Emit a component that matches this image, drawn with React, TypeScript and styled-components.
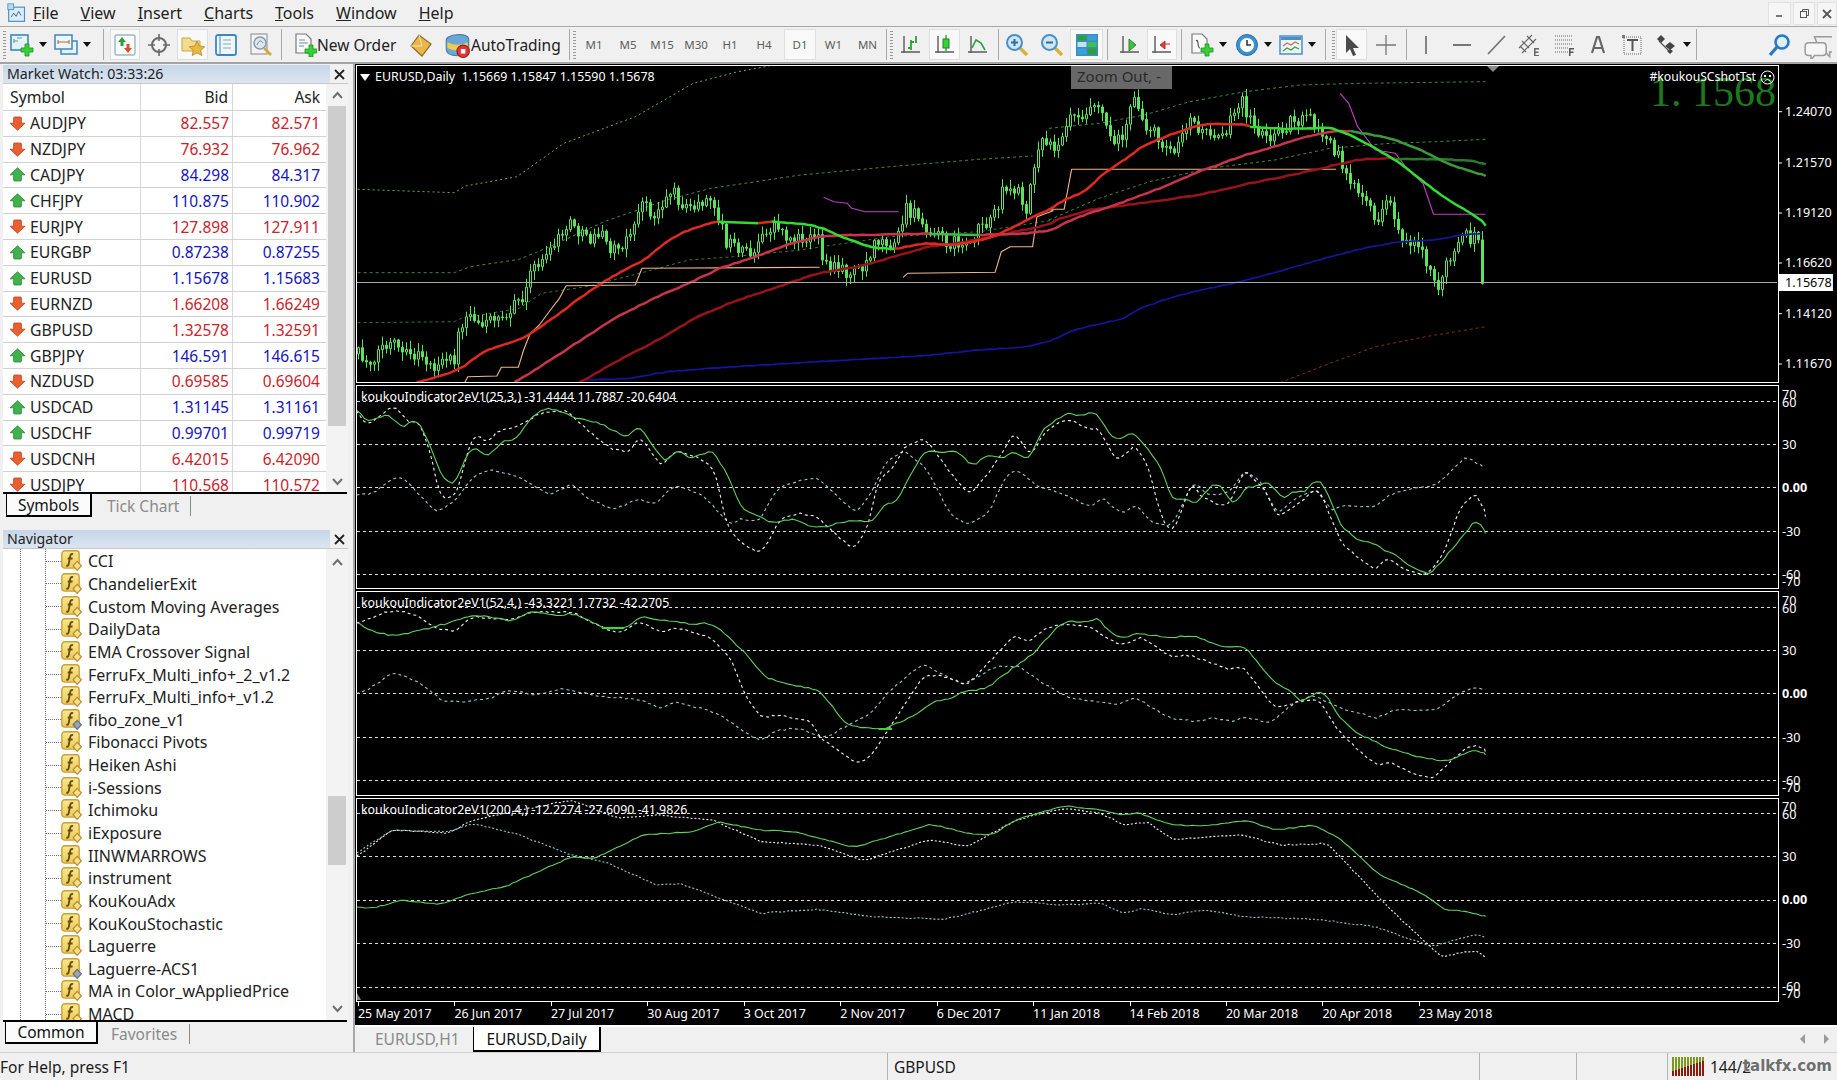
import React, { useMemo } from "react";
import styled, { createGlobalStyle } from "styled-components";

const Global = createGlobalStyle`
  html, body { margin: 0; padding: 0; background: #f0f0f0; overflow: hidden; }
  * { box-sizing: border-box; }
`;

const UI = `"Noto Sans", "Open Sans", sans-serif`;
const MT = `"Noto Sans", "Open Sans", sans-serif`;

/* ---------- shell ---------- */
const Page = styled.div`
  width: 1837px; height: 1080px; display: flex; flex-direction: column;
  background: #f0f0f0; color: #1a1a1a; font: 15.5px ${UI}; overflow: hidden; position: relative;
`;
const MenuBar = styled.div`
  height: 27px; display: flex; align-items: center; border-bottom: 1px solid #a8a8a8; padding-left: 7px; flex: none;
`;
const MenuList = styled.div`
  display: flex; gap: 22px; margin-left: 6px; font-size: 16px;
`;
const MenuItem = styled.span`color: #222;`;
const WinButtons = styled.div`
  margin-left: auto; display: flex; gap: 2px; height: 23px; align-self: flex-start; margin-top: 2px;
`;
const WinButton = styled.div<{ $w: number }>`
  width: ${(p) => p.$w}px; background: #f6f6f6; border: 1px solid #e2e2e2; display: flex; align-items: center; justify-content: center;
`;
const Toolbar = styled.div`
  height: 37px; flex: none; display: flex; align-items: center; border-bottom: 2px solid #a4a4a4;
`;
const Tool = styled.div<{ $w: number; $on?: boolean; $ml?: number; $pl?: number; $gap?: number }>`
  width: ${(p) => p.$w}px; height: 31px; flex: none; display: flex; align-items: center;
  justify-content: ${(p) => (p.$pl !== undefined ? "flex-start" : "center")};
  margin-left: ${(p) => p.$ml || 0}px; gap: ${(p) => p.$gap ?? 0}px;
  padding-left: ${(p) => p.$pl ?? 0}px;
  background: ${(p) => (p.$on ? "#f9f9f9" : "transparent")};
  border: 1px solid ${(p) => (p.$on ? "#dedede" : "transparent")};
  font-size: 15.5px; color: #222; white-space: nowrap;
`;
const Period = styled(Tool)`font-size: 11.5px; color: #5c5c5c;`;
const Caret = styled.i`
  display: block; width: 0; height: 0; border: 4px solid transparent; border-top: 5px solid #111; border-bottom: 0; margin-left: 5px;
`;
const Sep = styled.div<{ $w: number }>`
  width: ${(p) => p.$w}px; height: 31px; flex: none;
  background: linear-gradient(#a8a8a8, #a8a8a8) center / 1px 100% no-repeat;
`;
const Grip = styled.div<{ $w: number }>`
  width: ${(p) => p.$w}px; height: 28px; flex: none;
  background: repeating-linear-gradient(to bottom, #9a9a9a 0 1px, transparent 1px 3px) center / 3px 100% no-repeat;
`;
const ToolRight = styled.div`margin-left: auto; display: flex;`;
const Main = styled.div`flex: 1; display: flex; min-height: 0;`;
const Sidebar = styled.div`
  width: 355px; flex: none; display: flex; flex-direction: column; padding: 1px 0 0 3px; border-right: 2px solid #a8a8a8;
`;
const PanelBox = styled.div<{ $h: number }>`
  width: 345px; height: ${(p) => p.$h}px; flex: none; display: flex; flex-direction: column;
`;
const PanelTitle = styled.div<{ $mt?: number }>`
  height: 18px; flex: none; display: flex; align-items: center; justify-content: space-between; font-size: 14.2px; color: #222;
  margin-top: ${(p) => p.$mt || 0}px;
`;
const TitleFill = styled.div`
  width: 327px; height: 100%; background: linear-gradient(#c6d6e8, #dbe5f0); padding-left: 4px; line-height: 17px; white-space: nowrap;
`;
const CloseMark = styled.div`width: 18px; display: flex; justify-content: center;`;
const PanelBody = styled.div`flex: 1; display: flex; min-height: 0; border-top: 1px solid #c8c8c8;`;
const Grid = styled.div`width: 323px; flex: none; background: #fff; overflow: hidden;`;
const Row = styled.div<{ $head?: boolean }>`
  display: grid; grid-template-columns: 138px 92px 93px; height: ${(p) => (p.$head ? 27 : 25.8)}px;
  border-bottom: 1px solid #d2d2d2; align-items: center; color: #222;
`;
const SymCell = styled.div<{ $head?: boolean }>`
  height: 100%; display: flex; align-items: center; gap: 4px; padding-left: ${(p) => (p.$head ? 7 : 6)}px; border-right: 1px solid #d8d8d8;
  font-size: 15.8px;
`;
const NumCell = styled.div<{ $c?: string; $pad: number; $line?: boolean }>`
  height: 100%; display: flex; align-items: center; justify-content: flex-end; padding-right: ${(p) => p.$pad}px;
  color: ${(p) => p.$c || "#222"}; border-right: ${(p) => (p.$line ? "1px solid #d8d8d8" : "0")};
`;
const Scroll = styled.div`
  width: 22px; flex: none; display: flex; flex-direction: column; align-items: center; background: #f3f3f3;
`;
const ScrollCap = styled.div<{ $h: number }>`
  height: ${(p) => p.$h}px; flex: none; display: flex; align-items: center; justify-content: center;
`;
const ScrollTrack = styled.div`flex: 1; width: 18px; min-height: 0;`;
const Thumb = styled.div<{ $top: number; $h: number }>`
  margin-top: ${(p) => p.$top}px; height: ${(p) => p.$h}px; background: #cdcdcd;
`;
const TabStrip = styled.div<{ $h: number; $pl: number }>`
  height: ${(p) => p.$h}px; flex: none; display: flex; align-items: flex-start; border-top: 2px solid #000;
  padding-left: ${(p) => p.$pl}px; font-size: 15.5px; margin-right: 1px;
`;
const TabOn = styled.div<{ $w: number; $h: number }>`
  width: ${(p) => p.$w}px; height: ${(p) => p.$h}px; background: #fbfbfb; display: flex; align-items: center; justify-content: center;
  border: 1px solid #000; border-top: 0; border-bottom-width: 2px; border-right-width: 2px; color: #111;
`;
const TabOff = styled.div<{ $w: number; $pl: number }>`
  width: ${(p) => p.$w}px; height: 20px; margin-top: 2px; padding-left: ${(p) => p.$pl}px; line-height: 20px; color: #8a8a8a; border-right: 1px solid #8a8a8a;
`;
const NavList = styled.div`
  width: 323px; flex: none; padding-top: 1px; overflow: hidden; background-color: #fff;
  background-image:
    repeating-linear-gradient(to bottom, #777 0 1px, transparent 1px 2px),
    repeating-linear-gradient(to bottom, #777 0 1px, transparent 1px 2px);
  background-size: 1px 100%, 1px 100%;
  background-position: 17px 0, 42px 0;
  background-repeat: no-repeat;
`;
const NavRow = styled.div`
  height: 22.65px; display: flex; align-items: center; font-size: 16px; color: #222; white-space: nowrap; padding-left: 43px;
`;
const NavDots = styled.i`
  width: 15px; height: 1px; flex: none; background: repeating-linear-gradient(to right, #777 0 1px, transparent 1px 2px);
`;
const NavLabel = styled.span`margin-left: 5px;`;
const Workspace = styled.div`flex: 1; display: flex; flex-direction: column; min-width: 0;`;
const ChartArea = styled.div`
  height: 961px; flex: none; background: #000; padding: 1px 0 0 1px; display: flex; flex-direction: column; gap: 2px;
`;
const PaneRow = styled.div<{ $h: number }>`height: ${(p) => p.$h}px; flex: none; display: flex;`;
const Plot = styled.div`
  width: 1423px; flex: none; height: 100%; border: 1px solid #fff; position: relative; overflow: hidden;
`;
const PlotSvg = styled.svg`display: block; width: 100%; height: 100%;`;
const AxisSvg = styled.svg`
  display: block; flex: 1; min-width: 0; height: 100%; overflow: visible;
  text { font: 12.4px ${MT}; fill: #fff; }
`;
const Legend = styled.div`
  position: absolute; left: 18px; top: 2px; font: 12.4px/17px ${MT}; color: #fff; white-space: pre;
`;
const IndLegend = styled.div`
  position: absolute; left: 4px; top: 2px; font: 12.4px/17px ${MT}; color: #fff; white-space: pre;
`;
const LegendTri = styled.i`
  position: absolute; left: -15px; top: 6px; width: 0; height: 0; border: 5px solid transparent; border-top: 7px solid #fff; border-bottom: 0;
`;
const Shot = styled.div`
  position: absolute; right: 3px; top: 2px; display: flex; align-items: center; gap: 4px; font: 12.2px/18px ${MT}; color: #fff;
`;
const BigPrice = styled.div`
  position: absolute; right: 2px; top: 5px; font: 42px/42px "Liberation Serif", serif; color: #1c7a1c; white-space: pre;
`;
const ZoomTip = styled.div`
  position: absolute; left: 714px; top: -1px; width: 101px; height: 24px; background: rgba(118,118,118,.88); color: #2a2a2a;
  font-size: 15px; line-height: 23px; padding-left: 6px; white-space: pre;
`;
const TopMark = styled.i`
  position: absolute; left: 1130px; top: 0; width: 0; height: 0; border: 6px solid transparent; border-top: 6px solid #8a8a8a; border-bottom: 0;
`;
const TimeAxis = styled.div`
  height: 22px; flex: none; display: flex; margin-top: -2px; padding-left: 2px;
`;
const TimeCell = styled.div`
  width: 96.45px; flex: none; font: 12.4px/16px ${MT}; color: #fff; padding-top: 4px; white-space: nowrap;
  background: linear-gradient(#fff, #fff) left top / 1px 4px no-repeat;
`;
const WorkTabs = styled.div`
  height: 27px; flex: none; border-top: 2px solid #fff; display: flex; align-items: flex-start; font-size: 15.5px; padding-right: 7px;
`;
const WorkTabOff = styled.div`width: 118px; padding: 2px 0 0 20px; color: #8a8a8a; line-height: 21px;`;
const WorkTabOn = styled.div`
  width: 128px; height: 25px; background: #fff; border: 1px solid #000; border-top: 0; border-bottom-width: 2px; border-right-width: 2px;
  display: flex; align-items: center; justify-content: center; color: #111;
`;
const TabArrows = styled.div`margin-left: auto; display: flex; gap: 15px; height: 24px; align-items: center;`;
const StatusBar = styled.div`
  height: 28px; flex: none; display: flex; align-items: center; border-top: 1px solid #d0d0d0; font-size: 15.5px; position: relative;
`;
const StatusCell = styled.div<{ $w: number; $pl?: number }>`
  width: ${(p) => p.$w}px; height: 100%; flex: none; padding-left: ${(p) => p.$pl ?? 6}px; display: flex; align-items: center;
  border-right: 1px solid #b4b4b4; white-space: nowrap; gap: 6px;
`;
const StatusRest = styled.div`flex: 1; height: 100%; display: flex; align-items: center; padding-left: 4px; gap: 6px;`;
const Watermark = styled.div`
  position: absolute; right: 5px; top: 4px; font: bold 15px/18px "DejaVu Sans", sans-serif; color: #6f6f6f; text-shadow: 0 0 2px #fff;
`;

/* ---------- icons ---------- */
type SP = { s?: number; children?: React.ReactNode };
const Ico = ({ s = 24, children }: SP) => (
  <svg width={s} height={s} viewBox="0 0 24 24" fill="none" style={{ flex: "none" }}>{children}</svg>
);
const Plus = ({ x = 0, y = 0 }: { x?: number; y?: number }) => (
  <path transform={`translate(${x} ${y})`} d="M4 0h4v4h4v4H8v4H4V8H0V4h4z" fill="#37d037" stroke="#1b8f1b" strokeWidth=".8" />
);
const Axes = () => <path d="M5 3v17M2 19h19" stroke="#5b5b5b" strokeWidth="1.4" />;
const AppIcon = () => (
  <Ico s={20}>
    <rect x="2" y="5" width="19" height="17" fill="#dcecf8" stroke="#4c8fc4" strokeWidth="1.4" />
    <rect x="1" y="1" width="7" height="7" fill="#bcd8ef" stroke="#4c8fc4" />
    <path d="M5 17l3-5 3 4 3-6 3 5" stroke="#3d6fa0" strokeWidth="1.2" />
  </Ico>
);
const IcoNewChart = () => (
  <Ico>
    <rect x="1" y="2" width="17" height="15" fill="#e6f1fa" stroke="#3f86bf" strokeWidth="1.6" />
    <path d="M4 6v4M4 8h4M7 5h5" stroke="#5a8" strokeWidth="1.2" /><Plus x={11} y={11} />
  </Ico>
);
const IcoProfiles = () => (
  <Ico>
    <rect x="7" y="8" width="16" height="13" fill="#e6f1fa" stroke="#3f86bf" strokeWidth="1.5" />
    <rect x="1" y="2" width="17" height="14" fill="#eef5fb" stroke="#3f86bf" strokeWidth="1.5" />
    <path d="M4 9h11M4 7v4M15 7v4" stroke="#a07040" strokeWidth="1.1" />
  </Ico>
);
const IcoMarket = () => (
  <Ico>
    <rect x="2" y="2" width="20" height="20" rx="2" fill="#fafafa" stroke="#9ab8c8" strokeWidth="1.4" />
    <path d="M9 4l4 5h-2.5v4h-3V9H5z" fill="#2f9f3c" /><path d="M15 20l-4-5h2.5v-4h3v4H19z" fill="#d8502c" />
  </Ico>
);
const IcoNav = () => (
  <Ico>
    <circle cx="12" cy="12" r="7" stroke="#6a6a6a" strokeWidth="2" fill="#f4f4f4" />
    <path d="M12 1v7M12 16v7M1 12h7M16 12h7" stroke="#6a6a6a" strokeWidth="1.6" />
  </Ico>
);
const IcoFolder = () => (
  <Ico>
    <path d="M1 5h8l2 3h8v10H1z" fill="#f4dc8c" stroke="#c8a84a" />
    <path d="M16 8l2.4 5 5.4.7-4 3.6 1 5.3-4.8-2.7-4.8 2.7 1-5.3-4-3.6 5.4-.7z" fill="#e8b93c" stroke="#a8802a" strokeWidth=".7" />
  </Ico>
);
const IcoTerm = () => (
  <Ico>
    <rect x="2" y="2" width="20" height="20" rx="2" fill="#eef6fc" stroke="#3f86bf" strokeWidth="1.8" />
    <path d="M6 3v18" stroke="#3f86bf" /><path d="M9 7h8M9 11h8M9 15h8" stroke="#8aa" />
  </Ico>
);
const IcoTester = () => (
  <Ico>
    <rect x="2" y="1" width="16" height="20" fill="#f4f4f4" stroke="#a0a0a0" strokeWidth="1.3" />
    <circle cx="11" cy="10" r="6" fill="#dde6ee" stroke="#8a9aa8" strokeWidth="1.5" />
    <path d="M15 15l7 7" stroke="#d2a83c" strokeWidth="2.6" /><path d="M8 12c2-5 4-5 6-2" stroke="#7a8a98" />
  </Ico>
);
const IcoOrder = () => (
  <Ico>
    <path d="M3 1h10l5 5v14H3z" fill="#f8f8f8" stroke="#7a7a7a" strokeWidth="1.2" />
    <path d="M6 7h6M6 10h9M6 13h5" stroke="#7a8a9a" /><Plus x={12} y={12} />
  </Ico>
);
const IcoDiamond = () => (
  <Ico>
    <path d="M2 13L10 2l12 9-9 12z" fill="#e8b64a" stroke="#8a6a28" strokeWidth="1.2" />
    <path d="M10 2l3 11-11 0" stroke="#fbe4a0" strokeWidth="1" />
  </Ico>
);
const IcoAuto = () => (
  <Ico s={27}>
    <path d="M2 8c0-5 18-7 20-1v10c0 4-6 5-10 5C6 22 2 20 2 16z" fill="#68a8d8" stroke="#4a7aa0" />
    <path d="M3 10c6 3 12 3 18 0v5c-6 3-12 3-18 0z" fill="#f0cc4c" />
    <circle cx="17" cy="18" r="5.5" fill="#e0383a" stroke="#9c1c1c" /><rect x="15" y="16" width="4" height="4" fill="#fff" />
  </Ico>
);
const IcoBars = () => (<Ico><Axes /><path d="M12 7v10M9 15h3M12 9h3M17 3v7" stroke="#2f9f3c" strokeWidth="1.8" /></Ico>);
const IcoCandle = () => (<Ico><Axes /><path d="M13 2v16" stroke="#1d8a1d" strokeWidth="1.2" /><rect x="10" y="6" width="6" height="9" fill="#39d039" stroke="#1d8a1d" /></Ico>);
const IcoLine = () => (<Ico><Axes /><path d="M6 15l4-8 5 3 4 7" stroke="#2f9f3c" strokeWidth="1.6" /></Ico>);
const Mag = ({ plus }: { plus?: boolean }) => (
  <Ico>
    <path d="M14 14l8 8" stroke="#d8b03c" strokeWidth="3.4" />
    <circle cx="9.5" cy="9.5" r="7.5" fill="#cfe6f6" stroke="#4c8fc4" strokeWidth="2" />
    <path d={plus ? "M6 9.5h7M9.5 6v7" : "M6 9.5h7"} stroke="#2a6ea8" strokeWidth="2" />
  </Ico>
);
const IcoTile = () => (
  <Ico>
    <rect x="1" y="1" width="22" height="22" fill="#3a8ec4" />
    <rect x="2.5" y="2.5" width="9" height="5" fill="#2f9f3c" /><rect x="12.5" y="2.5" width="9" height="5" fill="#3aa0d8" />
    <rect x="2.5" y="9" width="9" height="5" fill="#bfe3f6" /><rect x="12.5" y="9" width="9" height="5" fill="#3ec04a" />
    <rect x="2.5" y="15.5" width="9" height="6" fill="#3aa0d8" /><rect x="12.5" y="15.5" width="9" height="6" fill="#2f9f3c" />
  </Ico>
);
const IcoShift = () => (<Ico><Axes /><path d="M11 6l7 6-7 6z" fill="#40c040" stroke="#2a8a2a" /></Ico>);
const IcoScroll = () => (<Ico><Axes /><path d="M20 11h-5M15 8l-5 4 5 4z" fill="#d8403c" stroke="#b83030" /></Ico>);
const IcoIndic = () => (
  <Ico>
    <path d="M2 1h10l5 5v14H2z" fill="#f8f8f8" stroke="#7a7a7a" strokeWidth="1.2" />
    <path d="M6 8c3-3 1 7 4 7" stroke="#555" strokeWidth="1.2" /><Plus x={11} y={11} />
  </Ico>
);
const IcoClock = () => (
  <Ico>
    <circle cx="12" cy="12" r="10.5" fill="#3a90d0" stroke="#2a6ea8" />
    <circle cx="12" cy="12" r="7" fill="#fff" /><path d="M12 7v5h4" stroke="#333" strokeWidth="1.6" />
  </Ico>
);
const IcoTpl = () => (
  <Ico>
    <rect x="1" y="3" width="22" height="18" fill="#eaf3fa" stroke="#4c8fc4" strokeWidth="1.5" />
    <rect x="2" y="4" width="20" height="3" fill="#4c8fc4" />
    <path d="M4 13l4-3 4 2 4-3 4 2" stroke="#c87840" strokeWidth="1.3" /><path d="M4 18l4-3 4 2 4-3 4 2" stroke="#3ca03c" strokeWidth="1.3" />
  </Ico>
);
const IcoCursor = () => (<Ico><path d="M6 2l13 13h-6l3 7-3 1-3-7-4 4z" fill="#4a4a4a" /></Ico>);
const IcoCross = () => (<Ico><path d="M12 2v20M2 12h20" stroke="#777" strokeWidth="1.3" /></Ico>);
const IcoV = () => (<Ico><path d="M12 3v18" stroke="#777" strokeWidth="1.8" /></Ico>);
const IcoH = () => (<Ico><path d="M3 12h18" stroke="#666" strokeWidth="1.8" /></Ico>);
const IcoT = () => (<Ico><path d="M4 21L21 3" stroke="#777" strokeWidth="1.8" /></Ico>);
const IcoChannel = () => (
  <Ico>
    <path d="M2 15L15 2M5 20L19 6M10 3l7 7M5 8l7 7M3 13l6 6" stroke="#666" strokeWidth="1.1" />
    <path d="M17 15h5v1.5h-3.5v2h3v1.5h-3v2H22V23h-5z" fill="#666" />
  </Ico>
);
const IcoFibo = () => (
  <Ico>
    <path d="M3 3h17M3 7h17M3 11h17M3 15h13M3 19h13" stroke="#666" strokeDasharray="1 1" />
    <path d="M17 15h5v1.5h-3.5v2h3v1.5h-3V23H17z" fill="#555" />
  </Ico>
);
const IcoA = () => (<Ico><path d="M6 20l5-16h2l5 16M8 15h8" stroke="#666" strokeWidth="2.2" /></Ico>);
const IcoLabel = () => (
  <Ico>
    <rect x="4" y="4" width="17" height="17" stroke="#666" strokeDasharray="1 1" />
    <path d="M7 7h11M12.5 7v11" stroke="#555" strokeWidth="2" /><rect x="2" y="2" width="3" height="3" fill="#777" />
  </Ico>
);
const IcoArrows = () => (
  <Ico>
    <path d="M3 6l4-4 4 4-4 4z" fill="#444" /><path d="M11 13l5-4 5 4-5 4z" fill="#444" /><path d="M5 8l12 12" stroke="#555" strokeWidth="1.2" />
    <path d="M13 18l3-2 3 2-3 3z" fill="#444" />
  </Ico>
);
const IcoSearch = () => (
  <Ico>
    <circle cx="15" cy="9" r="6.5" fill="#dceefa" stroke="#2a78c0" strokeWidth="2.6" />
    <path d="M10 14l-7 8" stroke="#2a78c0" strokeWidth="3.4" />
  </Ico>
);
const IcoChat = () => (
  <Ico s={28}>
    <path d="M9 5h14c3 0 4 2 4 4v5c0 2-1 4-4 4h-1v4l-4-4h-4z" fill="#efefef" stroke="#9a9a9a" strokeWidth="1.3" />
    <path d="M4 10h12c2 0 3 1 3 3v5c0 2-1 3-3 3h-7l-3 4v-4H4c-2 0-3-1-3-3v-5c0-2 1-3 3-3z" fill="#f6f6f6" stroke="#9a9a9a" strokeWidth="1.3" />
  </Ico>
);
const CloseX = () => (<svg width="11" height="11" viewBox="0 0 11 11"><path d="M1 1l9 9M10 1l-9 9" stroke="#222" strokeWidth="1.8" /></svg>);
const Chevron = ({ up }: { up?: boolean }) => (
  <svg width="13" height="9" viewBox="0 0 13 9" fill="none"><path d={up ? "M2 7l4.5-5L11 7" : "M2 2l4.5 5L11 2"} stroke="#707070" strokeWidth="2" /></svg>
);
const Arrow = ({ up }: { up: boolean }) => (
  <svg width="17" height="15" viewBox="0 0 17 15" style={{ flex: "none" }}>
    <path d={up ? "M8.5 .8L16 7.8h-3.6V13a1 1 0 0 1-1 1H5.600a1 1 0 0 1-1-1V7.800H1z" : "M8.500 14.200L1 7.200h3.600V2a1 1 0 0 1 1-1h5.800a1 1 0 0 1 1 1v5.200H16z"}
      fill={up ? "#42b04c" : "#e8602f"} stroke={up ? "#2a8a34" : "#c2401c"} strokeWidth=".8" strokeLinejoin="round" />
  </svg>
);
const TreeIcon = ({ alt }: { alt?: boolean }) => (
  <svg width="22" height="22" viewBox="0 0 19 19" style={{ flex: "none" }}>
    <defs>
      <linearGradient id="ty" x1="0" y1="0" x2="0" y2="1"><stop offset="0" stopColor="#f8e88c" /><stop offset="1" stopColor="#eccb58" /></linearGradient>
    </defs>
    <rect x=".7" y=".7" width="15" height="15" rx="2.5" fill="url(#ty)" stroke="#c9a040" strokeWidth="1.2" />
    <path d="M10.5 3.500c-2-.5-2.500.8-2.800 3l-1 5.500c-.3 1.600-1.300 1.800-2.200 1.400M5.800 7.300h4.200" stroke="#6a4c10" strokeWidth="1.600" fill="none" />
    <path d="M14 9.800l3.600 3.800-3.600 4-3.600-4z" fill={alt ? "#9aa4b0" : "#f8e08a"} stroke={alt ? "#66707c" : "#b88c2c"} />
  </svg>
);

/* ---------- data ---------- */
const UP = "#1414c0", DN = "#c8242c";
const quotes: [string, string, string, boolean][] = [
  ["AUDJPY", "82.557", "82.571", false], ["NZDJPY", "76.932", "76.962", false], ["CADJPY", "84.298", "84.317", true],
  ["CHFJPY", "110.875", "110.902", true], ["EURJPY", "127.898", "127.911", false], ["EURGBP", "0.87238", "0.87255", true],
  ["EURUSD", "1.15678", "1.15683", true], ["EURNZD", "1.66208", "1.66249", false], ["GBPUSD", "1.32578", "1.32591", false],
  ["GBPJPY", "146.591", "146.615", true], ["NZDUSD", "0.69585", "0.69604", false], ["USDCAD", "1.31145", "1.31161", true],
  ["USDCHF", "0.99701", "0.99719", true], ["USDCNH", "6.42015", "6.42090", false], ["USDJPY", "110.568", "110.572", false],
];
const navItems: [string, boolean?][] = [
  ["CCI"], ["ChandelierExit"], ["Custom Moving Averages"], ["DailyData"], ["EMA Crossover Signal"], ["FerruFx_Multi_info+_2_v1.2"],
  ["FerruFx_Multi_info+_v1.2"], ["fibo_zone_v1", true], ["Fibonacci Pivots"], ["Heiken Ashi"], ["i-Sessions"], ["Ichimoku"], ["iExposure"],
  ["IINWMARROWS"], ["instrument"], ["KouKouAdx"], ["KouKouStochastic"], ["Laguerre"], ["Laguerre-ACS1", true], ["MA in Color_wAppliedPrice"], ["MACD"],
];
const times = ["25 May 2017", "26 Jun 2017", "27 Jul 2017", "30 Aug 2017", "3 Oct 2017", "2 Nov 2017", "6 Dec 2017", "11 Jan 2018", "14 Feb 2018", "20 Mar 2018", "20 Apr 2018", "23 May 2018"];

type P = [number, number];
const conv = (ox: number, sx: number, oy: number) => (a: number[]) => {
  const r: P[] = [];
  for (let i = 0; i < a.length; i += 2) r.push([+(ox + a[i] / sx).toFixed(1), +(oy + a[i + 1] / 3).toFixed(1)]);
  return r;
};
const Z7 = conv(355, 2.24, 60), Z8 = conv(1050, 1.992, 60), Z9 = conv(355, 2.119, 380), Z10 = conv(1090, 2.099, 380), Z11 = conv(355, 1.058, 790);
const S = (p: P[]) => p.map((q) => q.join(",")).join(" ");

let wseed = 987;
const wrnd = () => { wseed = (wseed * 1664525 + 1013904223) >>> 0; return wseed / 4294967296; };
/* resample a hand-read curve onto the 4px bar grid, soften it and give it the small bar-to-bar jitter of real data */
const wob = (p: P[], amp: number): P[] => {
  const x0 = p[0][0], x1 = p[p.length - 1][0];
  const ys: number[] = [];
  let j = 1;
  for (let x = x0; x < x1; x += 4) {
    while (j < p.length - 1 && p[j][0] < x) j++;
    const [a, b] = [p[j - 1], p[j]];
    ys.push(a[1] + ((b[1] - a[1]) * (x - a[0])) / Math.max(b[0] - a[0], 0.1));
  }
  const out: P[] = ys.map((y, i) => {
    const s = (ys[Math.max(i - 1, 0)] + 2 * y + ys[Math.min(i + 1, ys.length - 1)]) / 4;
    return [x0 + i * 4, +(s + (wrnd() - 0.5) * 2 * amp).toFixed(1)] as P;
  });
  out.push(p[p.length - 1]);
  return out;
};

const pricePath = [
  ...Z7([5,880,30,910,60,860,90,855,110,890,150,890,180,925,225,895,235,810,255,750,290,800,310,765,355,750,385,690,400,620,440,580,470,510,490,490,520,545,550,520,575,570,625,520,640,420,670,470,710,390,745,450,790,420,815,470,835,550,895,580,940,490,980,540,1040,520,1043,620,1110,640,1150,600,1165,530,1210,560,1235,450,1270,480,1300,520,1340,550,1375,550,1400,490,1425,490,1455,380,1490,400,1505,440,1525,300,1545,240,1566,270]),
  ...Z8([0,270,20,240,45,150,70,160,95,110,120,220,140,240,170,120,195,200,245,270,280,170,300,220,350,210,385,130,410,210,450,240,480,180,520,180,545,230,575,280,600,360,620,420,650,480,680,430,700,530,730,540,760,620,770,680,800,600,825,530,855,540,860,540,862,660,872,660]),
];
function makeCandles() {
  let seed = 12345;
  const rnd = () => { seed = (seed * 1664525 + 1013904223) >>> 0; return seed / 4294967296; };
  const at = (x: number) => {
    for (let i = 1; i < pricePath.length; i++) {
      const [x0, y0] = pricePath[i - 1], [x1, y1] = pricePath[i];
      if (x <= x1) return y0 + ((y1 - y0) * (x - x0)) / Math.max(x1 - x0, 0.1);
    }
    return pricePath[pricePath.length - 1][1];
  };
  let solid = "", hollow = "", prev = at(358);
  for (let i = 0; i < 282; i++) {
    const x = 358 + i * 4;
    const c = at(x + 1) + (rnd() - 0.5) * 15;
    const top = Math.min(prev, c), bot = Math.max(prev, c);
    const hi = top - 1 - rnd() * 8, lo = bot + 1 + rnd() * 8;
    solid += `M${x + 1.5} ${hi.toFixed(1)}V${lo.toFixed(1)}`;
    const rect = `M${x + 0.5} ${top.toFixed(1)}h2V${bot.toFixed(1)}h-2z`;
    if (c < prev) hollow += rect; else solid += rect;
    prev = c;
  }
  return { solid, hollow };
}

const Line = styled.polyline<{ $c: string; $w?: number; $dash?: string }>`
  fill: none; stroke: ${(p) => p.$c}; stroke-width: ${(p) => p.$w ?? 1}; stroke-linejoin: round;
  stroke-dasharray: ${(p) => p.$dash || "none"};
`;
const Level = styled.line`stroke: #dcdcdc; stroke-width: 1; stroke-dasharray: 3 3; shape-rendering: crispEdges;`;

const RED = "#df2a22", PINK = "#c8344c", DARK = "#98141a", LIME = "#33dc33";
const trend: { p: P[]; c: string; w: number; dash?: string }[] = [
  { p: Z7([8,388,100,392,225,398,250,378,365,350,470,250,630,170,760,70,860,35,930,18]), c: "#5fb05f", w: 1, dash: "2 3" },
  { p: Z7([8,638,225,638,260,620,370,598,430,565,560,485,700,420,800,385,900,365,1000,345,1200,320,1400,298,1520,288]), c: "#3f8a3f", w: 1, dash: "3 3" },
  { p: Z8([0,205,100,190,190,165,280,125,390,95,500,75,620,70,870,65]), c: "#3f8a3f", w: 1, dash: "3 3" },
  { p: Z7([8,788,225,785,240,775,370,745,420,700,520,680,640,640,750,600,850,590,1000,570,1200,530,1400,515,1568,480]), c: "#327a32", w: 1, dash: "3 3" },
  { p: Z8([0,480,100,415,200,365,320,325,450,300,560,265,680,250,770,245,870,238]), c: "#3f8a3f", w: 1, dash: "3 3" },
  { p: Z8([460,968,560,910,650,860,750,830,870,800]), c: "#8a2a20", w: 1, dash: "3 3" },
];
const ma: { p: P[]; c: string; w: number }[] = [
  { p: wob([...Z7([520,960,620,955,700,935,800,925,950,912,1100,900,1250,890,1400,870,1510,860,1568,840]), ...Z8([0,845,50,810,150,775,180,745,260,705,320,685,380,665,480,625,560,590,640,560,700,545,770,540,820,525,862,520])], 0.35), c: "#14149c", w: 1.7 },
  { p: wob([...Z7([505,968,580,910,680,840,770,770,850,725,950,680,1040,640,1130,620,1210,590,1285,560,1350,550,1430,530,1500,510,1568,490]), ...Z8([0,485,80,450,180,430,300,405,400,370,500,340,570,315,620,298,690,295])], 0.4), c: DARK, w: 2.5 },
  { p: wob(Z8([690,297,780,298,840,302,870,313]), 0.3), c: "#2a7a2a", w: 2.5 },
  { p: wob(Z7([360,968,440,900,520,830,590,770,680,710,750,670,820,625,900,590,970,555,1040,530,1100,525,1160,525,1230,522,1290,520]), 0.4), c: PINK, w: 2.5 },
  { p: Z7([1290,522,1400,525]), c: "#44b84c", w: 2.5 },
  { p: wob([...Z7([1400,525,1490,522,1568,510]), ...Z8([0,512,60,470,150,425,230,380,290,340,390,285,450,260,500,235,560,215,600,213])], 0.4), c: PINK, w: 2.5 },
  { p: wob(Z8([600,213,680,235,740,270,800,315,870,348]), 0.3), c: "#3c9a3c", w: 2.5 },
  { p: wob(Z7([140,968,200,945,240,925,290,875,345,850,385,830,440,780,500,720,560,665,605,630,650,600,700,545,745,512,800,488,820,482]), 0.4), c: RED, w: 2.5 },
  { p: Z7([815,485,905,490]), c: LIME, w: 2.5 },
  { p: Z7([905,490,935,485]), c: RED, w: 2.5 },
  { p: wob(Z7([935,485,1010,492,1050,505,1100,535,1160,562,1210,567]), 0.3), c: LIME, w: 2.5 },
  { p: wob([...Z7([1210,567,1280,550,1340,555,1380,548,1430,530,1480,500,1530,465,1568,445]), ...Z8([0,447,30,420,70,395,110,340,150,300,190,255,240,225,290,200,320,192,380,192,400,198])], 0.4), c: RED, w: 2.5 },
  { p: wob(Z8([400,200,470,207,520,205,560,203,600,225,650,265,700,310,750,370,790,415,830,450,855,475,870,497]), 0.3), c: LIME, w: 2.5 },
];
const thin: { p: P[]; c: string }[] = [
  { p: Z7([248,968,255,950,320,948,330,922,368,922,380,870,395,820,415,795,440,750,460,715,475,677,630,675,645,625,1043,622]), c: "#f0b888" },
  { p: [...Z7([1230,652,1240,640,1436,637,1450,575,1470,560,1520,560,1530,470,1566,452]), ...Z8([0,448,30,448,45,328,572,328])], c: "#f0b888" },
  { p: Z7([1052,412,1075,425,1105,430,1115,445,1145,455,1220,455]), c: "#c040c0" },
  { p: Z8([580,100,597,130,615,200,650,270,690,280,710,320,745,370,766,463,870,463]), c: "#c040c0" },
];

const GREEN = "#5fd25f", WHITE = "#f4f4f4", CYAN = "#8fd0c8";
const JIT = 0.8;
const p2: [P[], string, string?][] = [
  [wob([...Z9([5,345,40,340,95,285,130,330,175,398,215,360,255,285,295,270,350,290,415,345,465,310,490,350,550,390,605,355,635,375,680,315,740,345,775,400,800,440,815,415,860,425,885,350,905,320,945,300,985,295,1010,330,1065,400,1100,330,1125,250,1165,210,1210,260,1265,405,1300,435,1345,400,1380,290,1405,268,1450,320,1500,340,1568,385]), ...Z10([0,370,30,353,70,405,100,370,130,430,175,435,205,345,220,305,250,345,295,340,325,270,360,305,395,400,440,350,480,330,510,395,530,375,600,382,630,345,680,325,730,315,770,260,790,228,830,265])], JIT), CYAN, "3 3"],
  [wob([...Z9([5,85,25,140,60,100,85,75,115,125,140,130,165,230,180,350,215,355,245,190,260,160,285,190,300,155,335,145,370,120,395,100,450,90,480,130,510,170,550,210,585,215,605,165,650,258,685,210,740,240,765,270,790,440,830,500,860,518,885,470,900,420,940,400,980,408,1010,450,1060,510,1090,440,1110,300,1145,260,1165,200,1210,175,1240,230,1270,290,1305,345,1350,270,1400,155,1435,230,1460,160,1510,115,1568,155]), ...Z10([0,150,10,125,60,245,95,195,125,260,145,380,165,450,180,450,215,305,235,350,275,375,295,375,325,268,370,330,395,412,440,370,480,320,510,420,530,490,570,540,605,570,625,530,660,570,710,585,745,520,780,380,815,335,832,410])], JIT), WHITE, "3 3"],
  [wob([...Z9([5,90,30,125,75,103,100,145,125,122,140,130,165,210,185,290,212,320,235,235,255,198,283,230,320,180,340,180,385,100,410,83,440,95,480,118,520,130,580,172,603,135,660,250,685,210,710,235,760,213,790,280,820,385,885,428,930,418,970,440,1010,438,1030,427,1080,420,1095,432,1130,365,1145,378,1175,295,1210,212,1240,218,1280,213,1310,258,1345,225,1375,238,1398,213,1428,243,1460,148,1510,98,1535,108,1568,95]), ...Z10([0,100,15,100,55,183,92,158,120,200,150,260,175,358,205,358,225,372,260,310,275,315,305,378,330,320,355,320,372,300,410,360,430,330,450,340,475,300,490,305,530,440,565,480,590,485,625,515,645,525,680,565,715,585,760,510,815,415,832,460])], JIT), GREEN],
];
const p3: [P[], string, string?][] = [
  [wob([...Z9([5,940,35,925,85,875,135,905,190,965,240,965,290,955,320,930,390,945,440,925,530,950,610,960,650,985,685,965,770,1000,860,1085,895,1050,945,1045,1000,1075,1040,1040,1095,1000,1130,940,1205,850,1290,915,1360,860,1410,858,1460,910,1510,950,1568,965]), ...Z10([0,960,60,975,95,950,170,1015,235,1025,260,1010,295,1025,330,1012,380,1030,430,970,470,945,530,985,605,1015,640,990,730,990,770,945,810,920,830,930])], JIT), CYAN, "3 3"],
  [wob([...Z9([5,730,60,700,90,690,130,705,175,745,215,755,250,710,330,720,380,695,460,695,530,745,570,760,600,725,660,760,680,740,760,775,800,840,830,950,865,1015,900,1005,970,1025,985,1070,1065,1150,1095,1130,1150,1010,1205,890,1240,885,1300,915,1330,870,1400,765,1430,785,1460,750,1505,730,1568,745]), ...Z10([0,725,30,770,70,795,110,770,170,830,210,825,260,850,290,868,325,862,390,985,440,965,480,955,525,1055,580,1130,610,1160,630,1145,670,1175,720,1195,790,1105,820,1095,832,1115])], JIT), WHITE, "3 3"],
  [wob([...Z9([5,725,40,755,85,768,150,748,210,725,250,705,300,712,330,725,365,700,390,695,430,707,465,700,530,745,575,745,605,710,720,733,740,728,765,735,830,820,870,890,910,910,985,930,1045,1035,1090,1045,1125,1048,1150,1030,1190,1005,1230,965,1265,955,1290,935,1340,925,1400,860,1440,820,1490,740,1510,725,1568,725]), ...Z10([0,720,15,710,50,765,75,772,105,760,170,775,215,765,280,800,325,798,345,830,390,910,425,935,445,968,480,935,495,940,530,1020,565,1060,630,1105,690,1130,750,1145,790,1120,815,1110,832,1125])], JIT), GREEN],
];
const p4: [P[], string, string?][] = [
  [wob(Z11([3,190,40,120,100,125,125,100,170,130,230,195,265,215,320,285,345,280,430,370,490,358,550,380,625,388,700,335,750,345,790,340,815,370,835,355,865,375,900,360,940,380,1020,388,1080,410,1140,470,1190,430,1197,445]), 0.6), CYAN, "2 2"],
  [wob(Z11([3,200,40,120,100,130,125,90,230,30,280,85,320,75,380,90,430,155,490,165,540,212,610,148,650,170,700,90,750,55,790,70,815,105,840,95,865,148,940,135,980,165,1030,160,1090,340,1150,500,1190,480,1197,505]), 0.6), WHITE, "2 2"],
  [wob(Z11([3,350,20,355,50,330,90,343,125,310,160,290,230,200,255,205,305,135,360,125,385,95,430,120,465,125,530,172,610,102,650,130,675,135,700,90,750,47,790,60,810,75,830,68,865,105,900,108,945,92,975,120,1015,105,1045,150,1085,255,1130,310,1155,360,1175,362,1197,380]), 0.5), GREEN],
];

/* ---------- chart parts ---------- */
const vb = (y: number, h: number) => `358 ${y + 1} 1421 ${h - 2}`;
const IndPane = ({ y, h, levels, lines, title, labels, extra }: {
  y: number; h: number; levels: number[]; lines: [P[], string, string?][]; title: string; labels: [string, number][]; extra?: React.ReactNode;
}) => (
  <PaneRow $h={h}>
    <Plot>
      <PlotSvg viewBox={vb(y, h)} preserveAspectRatio="none">
        {levels.map((v) => <Level key={v} x1={358} x2={1778} y1={v + 0.5} y2={v + 0.5} />)}
        {lines.map(([p, c, d], i) => <Line key={i} points={S(p)} $c={c} $dash={d} $w={1.1} />)}
        {extra}
      </PlotSvg>
      <IndLegend>{title}</IndLegend>
    </Plot>
    <AxisSvg viewBox={`1780 ${y} 57 ${h}`} preserveAspectRatio="none">
      {labels.map(([t, v], i) => (
        <text key={i} x={1783} y={v + 4} style={t === "0.00" ? { fontWeight: 700 } : undefined}>{t}</text>
      ))}
    </AxisSvg>
  </PaneRow>
);
const indLabels = (base: number): [string, number][] => [
  ["70", base - 7], ["60", base + 1], ["30", base + 43], ["0.00", base + 86], ["-30", base + 130], ["-60", base + 173], ["-70", base + 180],
];

export default function App() {
  const candles = useMemo(makeCandles, []);
  return (
    <Page>
      <Global />
      <MenuBar>
        <AppIcon />
        <MenuList>
          {["File", "View", "Insert", "Charts", "Tools", "Window", "Help"].map((m) => (
            <MenuItem key={m}><u>{m[0]}</u>{m.slice(1)}</MenuItem>
          ))}
        </MenuList>
        <WinButtons>
          <WinButton $w={23}><svg width="9" height="9"><rect x="1" y="6" width="6" height="2" fill="#777" /></svg></WinButton>
          <WinButton $w={22}><svg width="11" height="11" fill="none" stroke="#555"><rect x="1.5" y="3.5" width="6" height="6" /><path d="M3.5 3.5v-2h6v6h-2" /></svg></WinButton>
          <WinButton $w={20}><svg width="10" height="10"><path d="M1 1l8 8M9 1l-8 8" stroke="#555" strokeWidth="1.8" /></svg></WinButton>
        </WinButtons>
      </MenuBar>

      <Toolbar>
        <Grip $w={8} />
        <Tool $w={40}><IcoNewChart /><Caret /></Tool>
        <Tool $w={48}><IcoProfiles /><Caret /></Tool>
        <Sep $w={14} />
        <Tool $w={30} $on><IcoMarket /></Tool>
        <Tool $w={37}><IcoNav /></Tool>
        <Tool $w={31} $on><IcoFolder /></Tool>
        <Tool $w={35}><IcoTerm /></Tool>
        <Tool $w={35}><IcoTester /></Tool>
        <Sep $w={7} />
        <Tool $w={118} $pl={7}><IcoOrder />New Order</Tool>
        <Tool $w={35}><IcoDiamond /></Tool>
        <Tool $w={128} $pl={5}><IcoAuto />AutoTrading</Tool>
        <Sep $w={6} />
        <Grip $w={5} />
        {["M1", "M5", "M15", "M30", "H1", "H4"].map((t) => <Period key={t} $w={34}>{t}</Period>)}
        <Period $w={32} $ml={3} $on>D1</Period>
        <Period $w={35}>W1</Period>
        <Period $w={33}>MN</Period>
        <Sep $w={4} />
        <Grip $w={6} />
        <Tool $w={34}><IcoBars /></Tool>
        <Tool $w={31} $ml={1} $on><IcoCandle /></Tool>
        <Tool $w={36}><IcoLine /></Tool>
        <Sep $w={4} />
        <Tool $w={34}><Mag plus /></Tool>
        <Tool $w={36}><Mag /></Tool>
        <Tool $w={33} $on><IcoTile /></Tool>
        <Sep $w={9} />
        <Tool $w={35}><IcoShift /></Tool>
        <Tool $w={30} $on><IcoScroll /></Tool>
        <Sep $w={8} />
        <Tool $w={46}><IcoIndic /><Caret /></Tool>
        <Tool $w={44}><IcoClock /><Caret /></Tool>
        <Tool $w={44}><IcoTpl /><Caret /></Tool>
        <Sep $w={12} />
        <Grip $w={5} />
        <Tool $w={31} $on><IcoCursor /></Tool>
        <Tool $w={37}><IcoCross /></Tool>
        <Sep $w={4} />
        <Tool $w={36}><IcoV /></Tool>
        <Tool $w={35}><IcoH /></Tool>
        <Tool $w={33}><IcoT /></Tool>
        <Tool $w={34}><IcoChannel /></Tool>
        <Tool $w={35}><IcoFibo /></Tool>
        <Tool $w={33}><IcoA /></Tool>
        <Tool $w={35}><IcoLabel /></Tool>
        <Tool $w={47}><IcoArrows /><Caret /></Tool>
        <Sep $w={1} />
        <ToolRight>
          <Tool $w={40}><IcoSearch /></Tool>
          <Tool $w={38}><IcoChat /></Tool>
        </ToolRight>
      </Toolbar>

      <Main>
        <Sidebar>
          <PanelBox $h={456}>
            <PanelTitle>
              <TitleFill>Market Watch: 03:33:26</TitleFill>
              <CloseMark><CloseX /></CloseMark>
            </PanelTitle>
            <PanelBody>
              <Grid>
                <Row $head>
                  <SymCell $head>Symbol</SymCell>
                  <NumCell $pad={4} $line>Bid</NumCell>
                  <NumCell $pad={6}>Ask</NumCell>
                </Row>
                {quotes.map(([s, b, a, up]) => (
                  <Row key={s}>
                    <SymCell><Arrow up={up} />{s}</SymCell>
                    <NumCell $pad={3} $c={up ? UP : DN} $line>{b}</NumCell>
                    <NumCell $pad={6} $c={up ? UP : DN}>{a}</NumCell>
                  </Row>
                ))}
              </Grid>
              <Scroll>
                <ScrollCap $h={22}><Chevron up /></ScrollCap>
                <ScrollTrack><Thumb $top={0} $h={320} /></ScrollTrack>
                <ScrollCap $h={22}><Chevron /></ScrollCap>
              </Scroll>
            </PanelBody>
            <TabStrip $h={29} $pl={3}>
              <TabOn $w={86} $h={23}>Symbols</TabOn>
              <TabOff $w={99} $pl={15}>Tick Chart</TabOff>
            </TabStrip>
          </PanelBox>
          <PanelBox $h={531}>
            <PanelTitle $mt={9}>
              <TitleFill>Navigator</TitleFill>
              <CloseMark><CloseX /></CloseMark>
            </PanelTitle>
            <PanelBody>
              <NavList>
                {navItems.map(([n, alt]) => (
                  <NavRow key={n}><NavDots /><TreeIcon alt={alt} /><NavLabel>{n}</NavLabel></NavRow>
                ))}
              </NavList>
              <Scroll>
                <ScrollCap $h={26}><Chevron up /></ScrollCap>
                <ScrollTrack><Thumb $top={221} $h={69} /></ScrollTrack>
                <ScrollCap $h={24}><Chevron /></ScrollCap>
              </Scroll>
            </PanelBody>
            <TabStrip $h={32} $pl={2}>
              <TabOn $w={93} $h={22}>Common</TabOn>
              <TabOff $w={92} $pl={13}>Favorites</TabOff>
            </TabStrip>
          </PanelBox>
        </Sidebar>

        <Workspace>
          <ChartArea>
            <PaneRow $h={318}>
              <Plot>
                <PlotSvg viewBox={vb(65, 318)} preserveAspectRatio="none">
                  {trend.map((t, i) => <Line key={i} points={S(t.p)} $c={t.c} $w={t.w} $dash={t.dash} />)}
                  <path d={candles.solid} fill="#5ce25c" stroke="#5ce25c" strokeWidth="1" />
                  <path d={candles.hollow} fill="#000" stroke="#5ce25c" strokeWidth="1" />
                  {thin.map((t, i) => <Line key={i} points={S(t.p)} $c={t.c} $w={1.1} />)}
                  {ma.map((t, i) => <Line key={i} points={S(t.p)} $c={t.c} $w={t.w} />)}
                  <line x1={358} x2={1778} y1={282.5} y2={282.5} stroke="#a8a8a8" shapeRendering="crispEdges" />
                </PlotSvg>
                <Legend><LegendTri />{"EURUSD,Daily  1.15669 1.15847 1.15590 1.15678"}</Legend>
                <BigPrice>1. 1568</BigPrice>
                <Shot>
                  #koukouSCshotTst
                  <svg width="15" height="15" viewBox="0 0 15 15" fill="none" stroke="#fff">
                    <circle cx="7.5" cy="7.5" r="6.5" /><path d="M4 5l2 2M6 5l-2 2M9 5l2 2M11 5l-2 2M4.5 11.5c2-2.5 4-2.5 6 0" />
                  </svg>
                </Shot>
                <ZoomTip>Zoom Out, -</ZoomTip>
                <TopMark />
              </Plot>
              <AxisSvg viewBox="1780 65 57 318" preserveAspectRatio="none">
                {([["1.24070", 111.7], ["1.21570", 163], ["1.19120", 213], ["1.16620", 263], ["1.14120", 313.7], ["1.11670", 364]] as [string, number][]).map(([t, v]) => (
                  <g key={t}>
                    <line x1={1780} x2={1783} y1={v} y2={v} stroke="#fff" />
                    <text x={1786} y={v + 4}>{t}</text>
                  </g>
                ))}
                <rect x={1780} y={274} width={53} height={17} fill="#fff" />
                <text x={1786} y={287} style={{ fill: "#000" }}>1.15678</text>
              </AxisSvg>
            </PaneRow>

            <IndPane y={385} h={204} title="koukouIndicator2eV1(25,3,) -31.4444 11.7887 -20.6404"
              levels={[401, 444, 487, 531, 574]} lines={p2} labels={indLabels(402)} />
            <IndPane y={591} h={205} title="koukouIndicator2eV1(52,4,) -43.3221 1.7732 -42.2705"
              levels={[607, 650, 693, 737, 780]} lines={p3} labels={indLabels(608)}
              extra={<>
                <Line points={S(Z9([525,744,572,744]))} $c={LIME} $w={2} />
                <Line points={S(Z9([1112,1047,1140,1047]))} $c={LIME} $w={2} />
              </>} />
            <IndPane y={798} h={204} title="koukouIndicator2eV1(200,4,) -12.2274 -27.6090 -41.9826"
              levels={[813, 856, 900, 943, 987]} lines={p4} labels={indLabels(814)}
              extra={<path d="M358 1000v-7l4 7z" fill="#8a8a8a" />} />
            <TimeAxis>
              {times.map((t) => <TimeCell key={t}>{t}</TimeCell>)}
            </TimeAxis>
          </ChartArea>
          <WorkTabs>
            <WorkTabOff>EURUSD,H1</WorkTabOff>
            <WorkTabOn>EURUSD,Daily</WorkTabOn>
            <TabArrows>
              <svg width="8" height="10"><path d="M6 0v10L1 5z" fill="#9a9a9a" /></svg>
              <svg width="8" height="10"><path d="M2 0v10l5-5z" fill="#9a9a9a" /></svg>
            </TabArrows>
          </WorkTabs>
        </Workspace>
      </Main>

      <StatusBar>
        <StatusCell $w={888} $pl={0}>For Help, press F1</StatusCell>
        <StatusCell $w={592}>GBPUSD</StatusCell>
        <StatusCell $w={97} />
        <StatusCell $w={91} />
        <StatusRest>
          <svg width="32" height="19" viewBox="0 0 32 19" style={{ flex: "none" }}>
            {Array.from({ length: 11 }).map((_, i) => (
              <g key={i}>
                <rect x={i * 3} y={0} width={2} height={19} fill="#7a9a1c" />
                <rect x={i * 3} y={Math.max(4, 14 - i)} width={2} height={19 - Math.max(4, 14 - i)} fill="#8a1c0c" />
              </g>
            ))}
          </svg>
          144/2
        </StatusRest>
        <Watermark>talkfx.com</Watermark>
      </StatusBar>
    </Page>
  );
}
